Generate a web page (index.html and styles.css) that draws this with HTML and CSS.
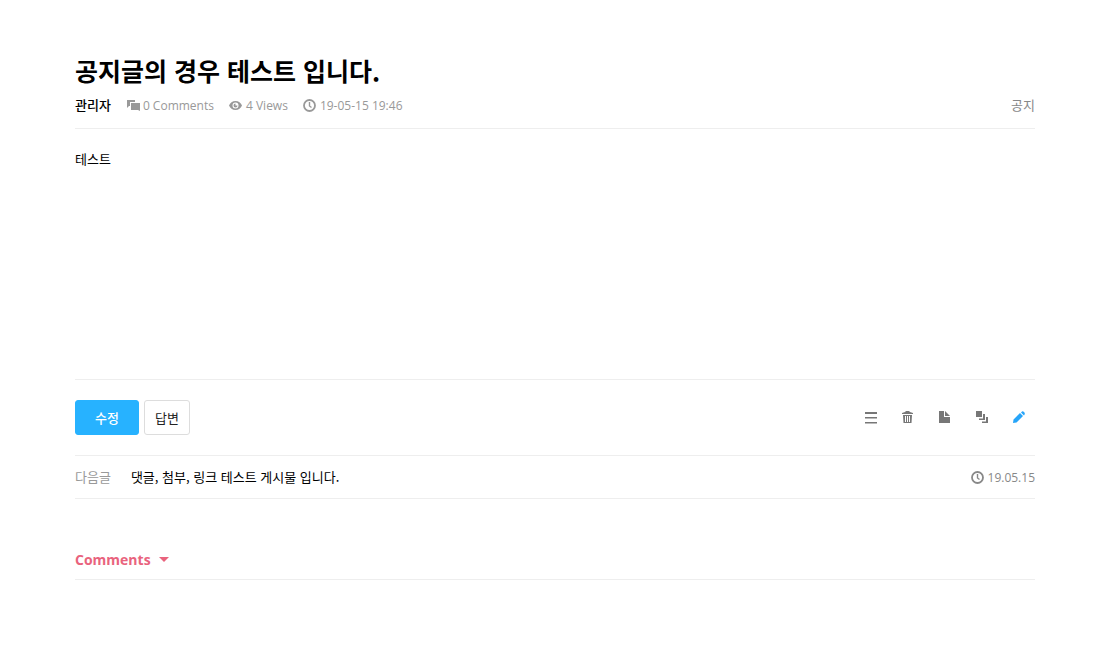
FILE: index.html
```html
<!DOCTYPE html>
<html lang="ko">

<head>
  <meta charset="UTF-8">
  <meta name="viewport" content="width=device-width, initial-scale=1">
  <title>공지글의 경우 테스트 입니다.</title>
  <link rel="stylesheet" href="styles.css">
</head>

<body>
  <main class="board">
    <article>
      <header class="post-header">
        <h1>공지글의 경우 테스트 입니다.</h1>
        <div class="meta">
          <strong class="author">관리자</strong>
          <span class="meta-item">
            <svg class="icon" viewBox="0 0 14 14">
              <path d="M1 1h8v2H4v4H3L1 9z" />
              <path d="M5 4h9v8l-2-1H5z" />
            </svg>
            0 Comments
          </span>
          <span class="meta-item">
            <svg class="icon" viewBox="0 0 14 14">
              <path fill-rule="evenodd" d="M6.500 2c3 0 5.500 2 6.500 4.500-1 2.500-3.500 4.500-6.500 4.500S1 9 0 6.500C1 4 3.500 2 6.500 2zm0 1.500a3 3 0 1 0 0 6 3 3 0 0 0 0-6z" />
              <path d="M6.500 4.500v2h2a2 2 0 1 1-2-2z" />
            </svg>
            4 Views
          </span>
          <span class="meta-item">
            <svg class="icon clock" viewBox="0 0 14 14">
              <circle cx="6.500" cy="6.500" r="5.500" />
              <path d="M6.500 3v4l2 1.500" />
            </svg>
            19-05-15 19:46
          </span>
          <a href="#" class="category">공지</a>
        </div>
      </header>
      <div class="post-body">
        <p>테스트</p>
      </div>
    </article>

    <div class="actions">
      <button type="button" class="btn btn-primary">수정</button>
      <button type="button" class="btn">답변</button>
      <div class="tools">
        <button type="button" class="tool" aria-label="목록">
          <svg class="icon" viewBox="0 0 14 14">
            <path d="M1 1h12v2H1zM1 6h12v1.500H1zM1 11h12v1.500H1z" />
          </svg>
        </button>
        <button type="button" class="tool" aria-label="삭제">
          <svg class="icon" viewBox="0 0 14 14">
            <path fill-rule="evenodd" d="M1 2l3-1 1-1h3l1 1 3 1v1H1zM2 4h9l-.5 8h-8zM4 5v6h1V5zM6 5v6h1V5zM8 5v6h1V5z" />
          </svg>
        </button>
        <button type="button" class="tool" aria-label="복사">
          <svg class="icon" viewBox="0 0 14 14">
            <path d="M1 0h5v6h6v6H1z" />
            <path d="M7 0l5 5H7z" />
          </svg>
        </button>
        <button type="button" class="tool" aria-label="이동">
          <svg class="icon" viewBox="0 0 14 14">
            <path d="M1 0h6v6H1zM8 3h2v6H4V7.500h4zM11 6h2v6H7v-1.500h4z" />
          </svg>
        </button>
        <button type="button" class="tool tool-write" aria-label="글쓰기">
          <svg class="icon" viewBox="0 0 14 14">
            <path d="M1 12l.5-3.500L8 2l3 3-6.500 6.500zM9 1.500l1-1q1-.5 2 .5t.8 2L12 4.500z" />
          </svg>
        </button>
      </div>
    </div>

    <nav class="post-nav">
      <span class="nav-label">다음글</span>
      <a href="#" class="nav-title">댓글, 첨부, 링크 테스트 게시물 입니다.</a>
      <span class="nav-date">
        <svg class="icon clock" viewBox="0 0 14 14">
          <circle cx="6.500" cy="6.500" r="5.500" />
          <path d="M6.500 3v4l2 1.500" />
        </svg>
        19.05.15
      </span>
    </nav>

    <section>
      <h2>
        <button type="button" class="comments-toggle">Comments <span class="caret"></span></button>
      </h2>
    </section>
  </main>
</body>

</html>
```

FILE: styles.css
```css
* {
  box-sizing: border-box;
}

body {
  margin: 0;
  background: #fff;
  color: #000;
  font-family: "Noto Sans CJK KR", sans-serif;
  font-size: 13px;
  line-height: 20px;
}

a {
  color: inherit;
  text-decoration: none;
}

h1,
h2,
p {
  margin: 0;
}

button {
  padding: 0;
  border: none;
  background: none;
  font-family: inherit;
  cursor: pointer;
}

.board {
  padding: 52px 80px 68px 75px;
}

.icon {
  width: 14px;
  height: 14px;
  fill: currentColor;
}

.clock {
  fill: none;
  stroke: currentColor;
  stroke-width: 1.8px;
}

.clock path {
  stroke-width: 1.4px;
}

.post-header {
  padding-bottom: 12px;
  border-bottom: 1px solid #eee;
}

h1 {
  font-size: 25px;
  line-height: 36px;
  font-weight: 700;
  margin-bottom: 7px;
}

.meta {
  display: flex;
  align-items: flex-start;
  gap: 15px;
  color: #999;
}

.author {
  color: #000;
  font-weight: 500;
}

.meta-item,
.nav-date {
  display: flex;
  align-items: center;
  gap: 3px;
  padding-top: 1px;
  font-family: "Open Sans", sans-serif;
  font-size: 12px;
}

.category {
  margin-left: auto;
  color: #888;
}

.post-body {
  min-height: 251px;
  padding: 20px 0;
  border-bottom: 1px solid #eee;
}

.actions {
  display: flex;
  gap: 5px;
  padding: 20px 0;
  border-bottom: 1px solid #eee;
}

.btn {
  height: 35px;
  padding: 0 10px;
  border: 1px solid #ddd;
  border-radius: 3px;
  background: #fff;
  color: #222;
  font-size: 13px;
}

.btn-primary {
  padding: 0 19px;
  border-color: #27b2ff;
  background: #27b2ff;
  color: #fff;
  font-weight: 500;
}

.tools {
  display: flex;
  gap: 5px;
  margin-left: auto;
}

.tool {
  display: flex;
  align-items: center;
  justify-content: center;
  width: 32px;
  height: 35px;
  color: #777;
}

.tool-write {
  color: #27a5f9;
}

.post-nav {
  display: flex;
  align-items: center;
  height: 43px;
  border-bottom: 1px solid #eee;
}

.nav-label {
  margin-right: 20px;
  color: #999;
}

.nav-date {
  margin-left: auto;
  color: #888;
}

h2 {
  margin-top: 50px;
  padding-bottom: 9px;
  border-bottom: 1px solid #eee;
  line-height: 21px;
}

.comments-toggle {
  display: flex;
  align-items: center;
  gap: 8px;
  color: #e9637d;
  font-family: "Open Sans", sans-serif;
  font-size: 14px;
  line-height: 21px;
  font-weight: 700;
}

.caret {
  border: 5px solid transparent;
  border-top-color: currentColor;
  border-bottom: none;
}
```
